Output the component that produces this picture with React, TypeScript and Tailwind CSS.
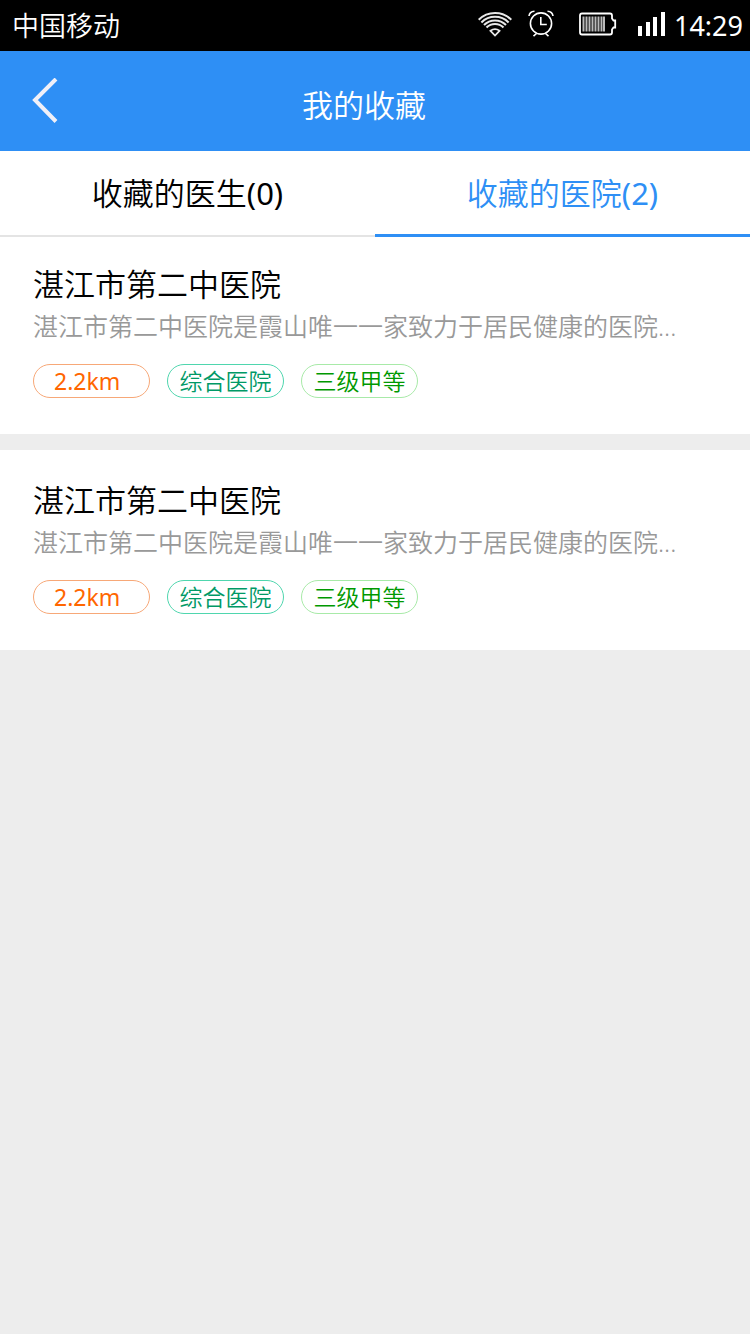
import { useState } from 'react'

type Tab = 'doctors' | 'hospitals'

type Hospital = {
  id: number
  name: string
  intro: string
  distance: string
  category: string
  level: string
}

const hospitals: Hospital[] = [1, 2].map((id) => ({
  id,
  name: '湛江市第二中医院',
  intro: '湛江市第二中医院是霞山唯一一家致力于居民健康的医院...',
  distance: '2.2km',
  category: '综合医院',
  level: '三级甲等',
}))

function WifiIcon() {
  return (
    <svg width="34" height="26" viewBox="0 0 34 26" fill="none" stroke="#e8e8e8" strokeWidth="2.1">
      <path d="M0.700 8.700A23 23 0 0 1 33.300 8.700" />
      <path d="M3.400 11.400A19.300 19.300 0 0 1 30.600 11.400" />
      <path d="M6 14A15.600 15.600 0 0 1 28 14" />
      <path d="M8.500 16.600A12 12 0 0 1 25.500 16.600" />
      <path d="M12.500 19.800Q17 16.500 21.500 19.800L17 24.500Z" strokeWidth="1.8" />
    </svg>
  )
}

function AlarmIcon() {
  return (
    <svg width="26" height="27" viewBox="0 0 26 27" fill="none" stroke="#fff" strokeWidth="1.6">
      <circle cx="13" cy="13.500" r="10.600" />
      <path d="M12.800 7v7.500h6" />
      <path d="M1 6Q1.500 1.500 6.500 1.200M25 6Q24.500 1.500 19.500 1.200" />
      <path d="M8.500 23.500L5.500 26.200M17.500 23.500L20.500 26.200" />
    </svg>
  )
}

function BatteryIcon() {
  return (
    <svg width="38" height="24" viewBox="0 0 38 24" fill="none" stroke="#fff">
      <path
        d="M3 1.500H31Q33 1.500 33 3.500V6.500L34.500 8.500H36.200V15.500H34.500L33 17.500V20.500Q33 22.500 31 22.500H3Q1 22.500 1 20.500V3.500Q1 1.500 3 1.500Z"
        strokeWidth="1.8"
      />
      <path
        d="M4.500 4.500v15M7.500 4.500v15M10.500 4.500v15M13.500 4.500v15M16.500 4.500v15M19.500 4.500v15M22.500 4.500v15M25 4.500v15"
        stroke="#bbb"
        strokeWidth="2"
      />
    </svg>
  )
}

function SignalIcon() {
  return (
    <svg width="28" height="24" viewBox="0 0 28 24" fill="#fff">
      <rect x="0" y="14" width="4" height="10" />
      <rect x="8" y="10" width="4" height="14" />
      <rect x="15" y="5" width="4" height="19" />
      <rect x="23" y="0" width="4" height="24" />
    </svg>
  )
}

function StatusBar() {
  return (
    <div className="flex h-[51px] items-center bg-black pl-3 pr-[7px] text-[27px] leading-9 text-white">
      <span>中国移动</span>
      <div className="ml-auto flex items-center pb-1">
        <WifiIcon />
        <span className="ml-4">
          <AlarmIcon />
        </span>
        <span className="ml-[25px]">
          <BatteryIcon />
        </span>
        <span className="ml-[21px]">
          <SignalIcon />
        </span>
      </div>
      <span className="ml-2 font-normal">14:29</span>
    </div>
  )
}

function HospitalCard({ hospital }: { hospital: Hospital }) {
  const pill = 'flex h-[34px] w-[117px] items-center rounded-full border text-[23px] leading-8'

  return (
    <li className="bg-white px-[33px] pb-9 pt-[30px]">
      <h2 className="text-[31px] leading-10 text-black">{hospital.name}</h2>
      <p className="mt-1 truncate text-[25px] leading-9 text-[#999]">{hospital.intro}</p>
      <div className="mt-5 flex gap-[17px]">
        <span className={`${pill} border-[#f7a878] pl-5 font-normal text-[#ff6600]`}>{hospital.distance}</span>
        <span className={`${pill} justify-center border-[#4fd6ae] text-[#009966]`}>{hospital.category}</span>
        <span className={`${pill} justify-center border-[#a8eaa8] text-[#009900]`}>{hospital.level}</span>
      </div>
    </li>
  )
}

export default function App() {
  const [activeTab, setActiveTab] = useState<Tab>('hospitals')

  const tabs: { key: Tab; label: string; count: number }[] = [
    { key: 'doctors', label: '收藏的医生', count: 0 },
    { key: 'hospitals', label: '收藏的医院', count: hospitals.length },
  ]

  return (
    <div className="min-h-screen bg-[#ededed] font-['Noto_Sans','Noto_Sans_CJK_SC',sans-serif] font-[350]">
      <StatusBar />

      {/* Header */}
      <header className="grid h-[100px] grid-cols-[58px_1fr_80px] items-center bg-[#2e8ff5] text-white">
        <button aria-label="返回" className="flex justify-end">
          <svg width="26" height="46" viewBox="0 0 26 46" fill="none" stroke="#f0f0f8" strokeWidth="4">
            <path d="M24 1L3 22L24 43.500" />
          </svg>
        </button>
        <h1 className="pt-2 text-center text-[31px] leading-10">我的收藏</h1>
      </header>

      {/* Tabs */}
      <nav className="relative -mb-[3px] grid h-[86px] grid-cols-2 bg-white">
        {tabs.map((tab) => (
          <button
            key={tab.key}
            onClick={() => setActiveTab(tab.key)}
            className={`text-[31px] leading-10 ${
              activeTab === tab.key
                ? 'border-b-[3px] border-[#2e8ff5] text-[#2e8ff5]'
                : 'border-b-2 border-[#e4e4e4] text-black'
            }`}
          >
            {tab.label}
            <span className="font-normal">{`(${tab.count})`}</span>
          </button>
        ))}
      </nav>

      {/* Tab content */}
      {activeTab === 'hospitals' && (
        <ul className="flex flex-col gap-4">
          {hospitals.map((hospital) => (
            <HospitalCard key={hospital.id} hospital={hospital} />
          ))}
        </ul>
      )}
    </div>
  )
}
